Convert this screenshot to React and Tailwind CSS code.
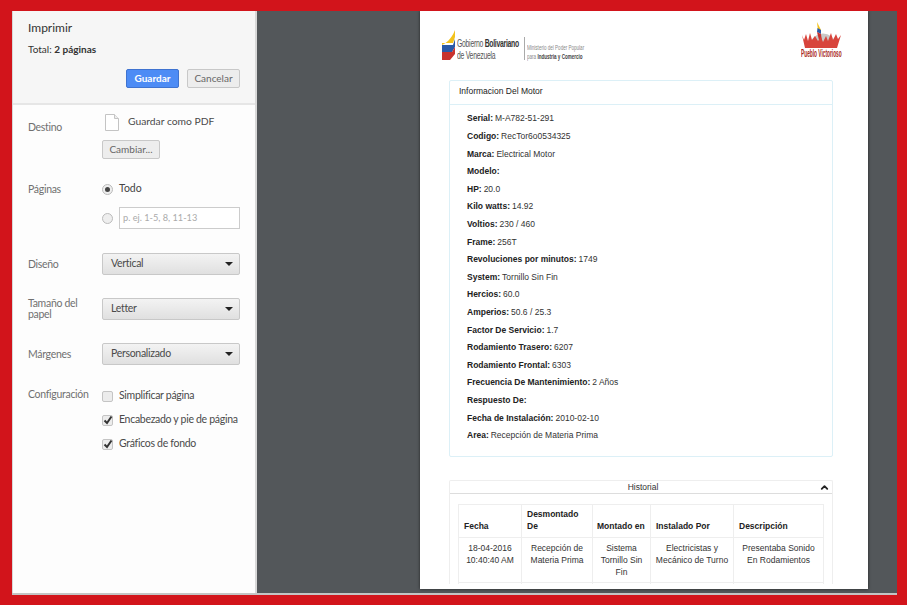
import React from "react";
import { ChevronUp } from "lucide-react";

const fields = [
  ["Serial:", "M-A782-51-291"],
  ["Codigo:", "RecTor6o0534325"],
  ["Marca:", "Electrical Motor"],
  ["Modelo:", ""],
  ["HP:", "20.0"],
  ["Kilo watts:", "14.92"],
  ["Voltios:", "230 / 460"],
  ["Frame:", "256T"],
  ["Revoluciones por minutos:", "1749"],
  ["System:", "Tornillo Sin Fin"],
  ["Hercios:", "60.0"],
  ["Amperios:", "50.6 / 25.3"],
  ["Factor De Servicio:", "1.7"],
  ["Rodamiento Trasero:", "6207"],
  ["Rodamiento Frontal:", "6303"],
  ["Frecuencia De Mantenimiento:", "2 Años"],
  ["Respuesto De:", ""],
  ["Fecha de Instalación:", "2010-02-10"],
  ["Area:", "Recepción de Materia Prima"],
];

const Label = ({ children, className = "" }) => (
  <div className={`w-[74px] shrink-0 pr-[8px] text-[10.5px] leading-[11px] tracking-[-0.3px] text-[#707070] ${className}`}>{children}</div>
);

const Select = ({ value }) => (
  <div className="flex h-[22px] w-[138px] shrink-0 items-center justify-between rounded-[2px] border border-[#c8c8c8] bg-gradient-to-b from-[#f3f3f3] to-[#e0e0e0] pl-[8px] pr-[6px] text-[10.5px] tracking-[-0.3px] text-[#4a4a4a]">
    {value}
    <span className="h-0 w-0 border-x-[4px] border-t-[4px] border-x-transparent border-t-[#222]"></span>
  </div>
);

const Check = ({ checked, label, className = "" }) => (
  <div className={`flex h-[14px] items-center gap-[6px] whitespace-nowrap text-[10.5px] tracking-[-0.3px] text-[#4a4a4a] ${className}`}>
    <span className="flex h-[11px] w-[11px] items-center justify-center rounded-[2px] border border-[#c4c4c4] bg-[#ececec]">
      {checked && (
        <svg width="10" height="10" viewBox="0 0 10 10" className="shrink-0">
          <path d="M1.5 5.5 L4 8 L8.5 1.5" fill="none" stroke="#333" strokeWidth="2" />
        </svg>
      )}
    </span>
    {label}
  </div>
);

const Sidebar = () => (
  <aside className="flex w-[245px] shrink-0 flex-col border-l border-r-2 border-l-[#d8d8d8] border-r-[#d8d8d8] bg-[#fdfdfd] font-['Lato',sans-serif]">
    <div className="h-[94px] border-b-2 border-[#e6e6e6] bg-[#f6f6f6] pl-[15px] pr-[15px] pt-[9px]">
      <div className="text-[12px] leading-[15px] text-[#333]">Imprimir</div>
      <div className="mt-[8px] text-[10px] leading-[13px] text-[#333]">
        Total: <b>2 páginas</b>
      </div>
      <div className="mt-[13px] flex justify-end gap-[8px]">
        <div className="flex h-[19px] w-[53px] items-center justify-center rounded-[2px] border border-[#3f73d0] bg-[#4d8cf5] text-[10px] font-bold text-white">
          Guardar
        </div>
        <div className="flex h-[19px] w-[53px] items-center justify-center rounded-[2px] border border-[#c8c8c8] bg-[#ededed] text-[10px] text-[#666]">
          Cancelar
        </div>
      </div>
    </div>

    <div className="pl-[15px] pr-[15px]">
      <div className="mt-[9px] flex">
        <Label className="mt-[8px]">Destino</Label>
        <div>
          <div className="flex items-center">
            <svg width="14" height="17" viewBox="0 0 14 17" className="ml-[3px]">
              <path d="M.5.5 H9.5 L13.5 4.5 V16.5 H.5 Z" fill="#fff" stroke="#c4c4c4" />
              <path d="M9.5.5 V4.5 H13.5" fill="#eee" stroke="#c4c4c4" />
            </svg>
            <span className="mb-[1px] ml-[9px] text-[10.3px] text-[#4a4a4a]">Guardar como PDF</span>
          </div>
          <div className="mt-[9px] flex h-[19px] w-[58px] items-center justify-center rounded-[2px] border border-[#c8c8c8] bg-[#ededed] text-[10px] text-[#666]">
            Cambiar...
          </div>
        </div>
      </div>

      <div className="mt-[23px] flex">
        <Label className="mt-[2px]">Páginas</Label>
        <div>
          <div className="flex h-[14px] items-center gap-[6px] text-[10.5px] text-[#444]">
            <span className="flex h-[11px] w-[11px] items-center justify-center rounded-full border border-[#bbb] bg-[#eee]">
              <span className="h-[5px] w-[5px] rounded-full bg-[#444]"></span>
            </span>
            Todo
          </div>
          <div className="mt-[11px] flex items-center gap-[6px]">
            <span className="h-[11px] w-[11px] rounded-full border border-[#bbb] bg-[#eee]"></span>
            <div className="flex h-[22px] w-[121px] items-center border border-[#ccc] bg-white pl-[3px] text-[9.2px] text-[#aaa]">
              p. ej. 1-5, 8, 11-13
            </div>
          </div>
        </div>
      </div>

      <div className="mt-[24px] flex h-[22px] items-center">
        <Label>Diseño</Label>
        <Select value="Vertical" />
      </div>
      <div className="mt-[23px] flex h-[22px] items-center">
        <Label>Tamaño del papel</Label>
        <Select value="Letter" />
      </div>
      <div className="mt-[23px] flex h-[22px] items-center">
        <Label>Márgenes</Label>
        <Select value="Personalizado" />
      </div>

      <div className="mt-[24px] flex">
        <Label>Configuración</Label>
        <div>
          <Check label="Simplificar página" />
          <Check checked label="Encabezado y pie de página" className="mt-[10px]" />
          <Check checked label="Gráficos de fondo" className="mt-[10px]" />
        </div>
      </div>
    </div>
  </aside>
);

const Logos = () => (
  <div className="flex h-[69px] items-center justify-between pl-[22px] pr-[27px] font-['Liberation_Sans',sans-serif]">
    <div className="mt-[-2px] flex items-center">
      <svg width="14" height="32" viewBox="0 0 14 32">
        <path d="M0 16 C4 14 9 11 13 1 V8 L11 14 H0 Z" fill="#f3c21b" />
        <path d="M0 16 H11 L13 10 V18 L10 23 H0 Z" fill="#2a5aa8" />
        <path d="M0 23 H10 L13 18 V25 L8 31 H0 Z" fill="#c8322e" />
      </svg>
      <div className="ml-[1px] mt-[9px] w-[65px] whitespace-nowrap">
        <div className="origin-left scale-x-[.65] text-[10.5px] leading-[12px] tracking-[-0.4px] text-[#555]">
          <div>Gobierno <b className="text-[#333]">Bolivariano</b></div>
          <div>de Venezuela</div>
        </div>
      </div>
      <div className="ml-[2px] mt-[8px] h-[23px] w-px bg-[#aaa]"></div>
      <div className="ml-[2px] mt-[14px] w-[52px] whitespace-nowrap">
        <div className="origin-left scale-x-[.65] text-[7px] leading-[9px] text-[#888]">
          <div>Ministerio del Poder Popular</div>
          <div>para <b className="text-[#444]">Industria y Comercio</b></div>
        </div>
      </div>
    </div>
    <div className="mt-[-12px] flex w-[40px] flex-col items-center">
      <svg width="40" height="28" viewBox="0 0 40 28">
        <path d="M8 24 A15 18 0 0 1 36 24 Z" fill="#c9c9c9" />
        <path d="M16 1 L20 9 L17 10 Z" fill="#f3c21b" />
        <path d="M16.5 7 L20 9 L20 13 L16 11 Z" fill="#2a5aa8" />
        <path d="M16 11 L20 13 L21 21 L18 19 Z" fill="#c8322e" />
        <path
          d="M1 14 L3 19 L5 13 L7 20 L9 12 L11 19 L14 15 L17 20 L20 16 L22 21 L25 15 L27 20 L30 12 L32 19 L35 13 L37 18 L40 14 L36 27 H4 Z"
          fill="#d8443c"
        />
      </svg>
      <div className="w-[40px] whitespace-nowrap">
        <div className="origin-left scale-x-[.48] text-[10px] font-bold leading-[10px] text-[#a82a22]">Pueblo Victorioso</div>
      </div>
    </div>
  </div>
);

const Panel = () => (
  <div className="ml-[29px] mr-[35px] rounded-[2px] border border-[#dcf0f7] font-['Liberation_Sans',sans-serif] text-[8.5px] text-[#333]">
    <div className="flex h-[24px] items-center border-b border-[#dcf0f7] pb-[2px] pl-[9px] text-[#222]">Informacion Del Motor</div>
    <div className="pb-[12px] pl-[17px] pt-[5px]">
      {fields.map(([k, v]) => (
        <div key={k} className="flex h-[17.6px] items-center gap-[2px]">
          <b className="text-[#222]">{k}</b>
          <span>{v}</span>
        </div>
      ))}
    </div>
  </div>
);

const cell = "border border-[#eee] px-[5px] pt-[4px]";
const head = "border border-[#eee] px-[5px] pb-[5px] leading-[12px]";

const History = () => (
  <div className="ml-[29px] mr-[35px] mt-[23px] rounded-t-[2px] border-x border-t border-[#eee] font-['Liberation_Sans',sans-serif] text-[8.5px] text-[#333]">
    <div className="flex h-[13px] items-center border-b border-[#ddd] pl-[20px]">
      <div className="flex-1 text-center">Historial</div>
      <div className="flex w-[16px] justify-center">
        <ChevronUp size={11} strokeWidth={4} color="#222" />
      </div>
    </div>
    <table className="ml-[8px] mt-[10px] w-[365px] table-fixed border-collapse">
      <thead>
        <tr className="h-[33px] text-left align-bottom font-bold text-[#222]">
          <th className={`w-[63px] ${head}`}>Fecha</th>
          <th className={`w-[71px] ${head}`}>Desmontado De</th>
          <th className={`w-[58px] ${head} !px-[4px] whitespace-nowrap`}>Montado en</th>
          <th className={`w-[83px] ${head}`}>Instalado Por</th>
          <th className={`w-[90px] ${head}`}>Descripción</th>
        </tr>
      </thead>
      <tbody>
        <tr className="h-[45px] text-center align-top leading-[12px]">
          <td className={cell}>18-04-2016 10:40:40 AM</td>
          <td className={cell}>Recepción de Materia Prima</td>
          <td className={cell}>Sistema Tornillo Sin Fin</td>
          <td className={`${cell} !px-[3px]`}>Electricistas y Mecánico de Turno</td>
          <td className={cell}>Presentaba Sonido En Rodamientos</td>
        </tr>
        <tr className="h-[20px]">
          <td className={cell}></td>
          <td className={cell}></td>
          <td className={cell}></td>
          <td className={cell}></td>
          <td className={cell}></td>
        </tr>
      </tbody>
    </table>
  </div>
);

export default function App() {
  return (
    <div className="h-[605px] w-[907px] overflow-hidden bg-[#d2141b] pb-[10px] pl-[12px] pr-[10px] pt-[11px]">
      <div className="flex h-[584px] border-b-2 border-[#c4c4c4]">
        <Sidebar />
        <main className="flex-1 overflow-hidden bg-[#53575a] pl-[163px] pr-[29px]">
          <div className="h-[578px] bg-white shadow-[0_0_3px_rgba(0,0,0,0.6)]">
            <div className="h-[573px] overflow-hidden">
              <Logos />
              <Panel />
              <History />
            </div>
          </div>
        </main>
      </div>
    </div>
  );
}
